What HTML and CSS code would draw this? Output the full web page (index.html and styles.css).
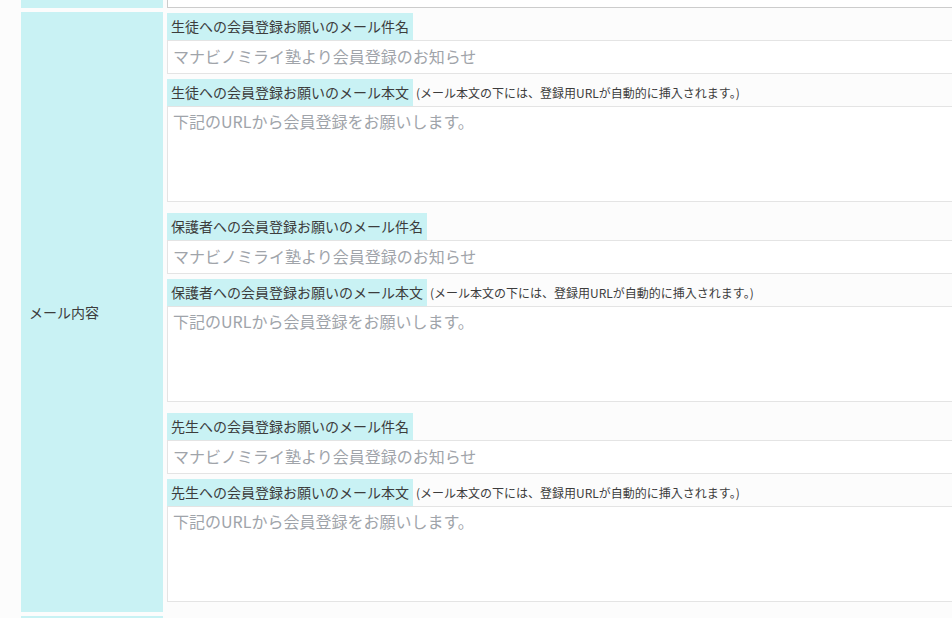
FILE: index.html
```html
<!DOCTYPE html>
<html lang="ja">
<head>
    <meta charset="UTF-8">
    <meta name="viewport" content="width=device-width, initial-scale=1.0">
    <title>メール内容設定</title>
    <link rel="stylesheet" href="styles.css">
</head>
<body>
    <div class="form">
        <!-- previous row (scrolled off) -->
        <div class="row row-prev">
            <div class="row-label"></div>
            <div class="row-body">
                <div class="prev-input"></div>
            </div>
        </div>

        <!-- mail settings -->
        <div class="row">
            <div class="row-label">メール内容</div>
            <div class="row-body">
                <div class="mail-group">
                    <div class="field-head"><span class="field-label">生徒への会員登録お願いのメール件名</span></div>
                    <input class="field-input" type="text" placeholder="マナビノミライ塾より会員登録のお知らせ">
                    <div class="field-head"><span class="field-label">生徒への会員登録お願いのメール本文</span><span class="field-note">(メール本文の下には、登録用URLが自動的に挿入されます。)</span></div>
                    <textarea class="field-text" placeholder="下記のURLから会員登録をお願いします。"></textarea>
                </div>
                <div class="mail-group">
                    <div class="field-head"><span class="field-label">保護者への会員登録お願いのメール件名</span></div>
                    <input class="field-input" type="text" placeholder="マナビノミライ塾より会員登録のお知らせ">
                    <div class="field-head"><span class="field-label">保護者への会員登録お願いのメール本文</span><span class="field-note">(メール本文の下には、登録用URLが自動的に挿入されます。)</span></div>
                    <textarea class="field-text" placeholder="下記のURLから会員登録をお願いします。"></textarea>
                </div>
                <div class="mail-group">
                    <div class="field-head"><span class="field-label">先生への会員登録お願いのメール件名</span></div>
                    <input class="field-input" type="text" placeholder="マナビノミライ塾より会員登録のお知らせ">
                    <div class="field-head"><span class="field-label">先生への会員登録お願いのメール本文</span><span class="field-note">(メール本文の下には、登録用URLが自動的に挿入されます。)</span></div>
                    <textarea class="field-text" placeholder="下記のURLから会員登録をお願いします。"></textarea>
                </div>
            </div>
        </div>

        <!-- next row -->
        <div class="row row-next">
            <div class="row-label"></div>
            <div class="row-body"></div>
        </div>
    </div>
</body>
</html>
```

FILE: styles.css
```css
body {
    margin: 0;
    background-color: #fcfcfc;
    font-family: 'Noto Sans CJK JP', 'Noto Sans', sans-serif;
    color: #3c3c3c;
    overflow: hidden;
}
.form {
    width: 1100px;
    padding-left: 21px;
    display: grid;
    gap: 4px;
}
.row {
    display: grid;
    grid-template-columns: 142px 1fr;
    gap: 4px;
}
.row-label {
    background-color: #c9f2f4;
    display: flex;
    align-items: center;
    padding-left: 8px;
    font-size: 14px;
}
.row-prev {
    height: 8px;
}
.prev-input {
    height: 8px;
    box-sizing: border-box;
    background-color: #fff;
    border: 1px solid #ccc;
    border-top: none;
}
.row-next {
    height: 40px;
}
.mail-group {
    display: flex;
    flex-direction: column;
    align-items: flex-start;
    padding-bottom: 10px;
}
.field-head {
    height: 28px;
    line-height: 26px;
    white-space: nowrap;
}
.field-label {
    display: inline-block;
    background-color: #c9f2f4;
    padding: 0 4px 2px;
    font-size: 14px;
}
.field-note {
    margin-left: 3px;
    font-size: 12px;
}
.field-input, .field-text {
    width: 100%;
    box-sizing: border-box;
    background-color: #fff;
    border: 1px solid #e4e4e4;
    font-family: inherit;
    font-size: 16px;
    color: #333;
    outline: none;
    margin: 0;
}
.field-input {
    height: 34px;
    padding: 0 5px 2px;
    margin-bottom: 4px;
}
.field-text {
    display: block;
    height: 96px;
    padding: 2px 5px;
    line-height: 1.5;
    resize: none;
}
.field-input::placeholder, .field-text::placeholder {
    color: #a0a4aa;
}
```
